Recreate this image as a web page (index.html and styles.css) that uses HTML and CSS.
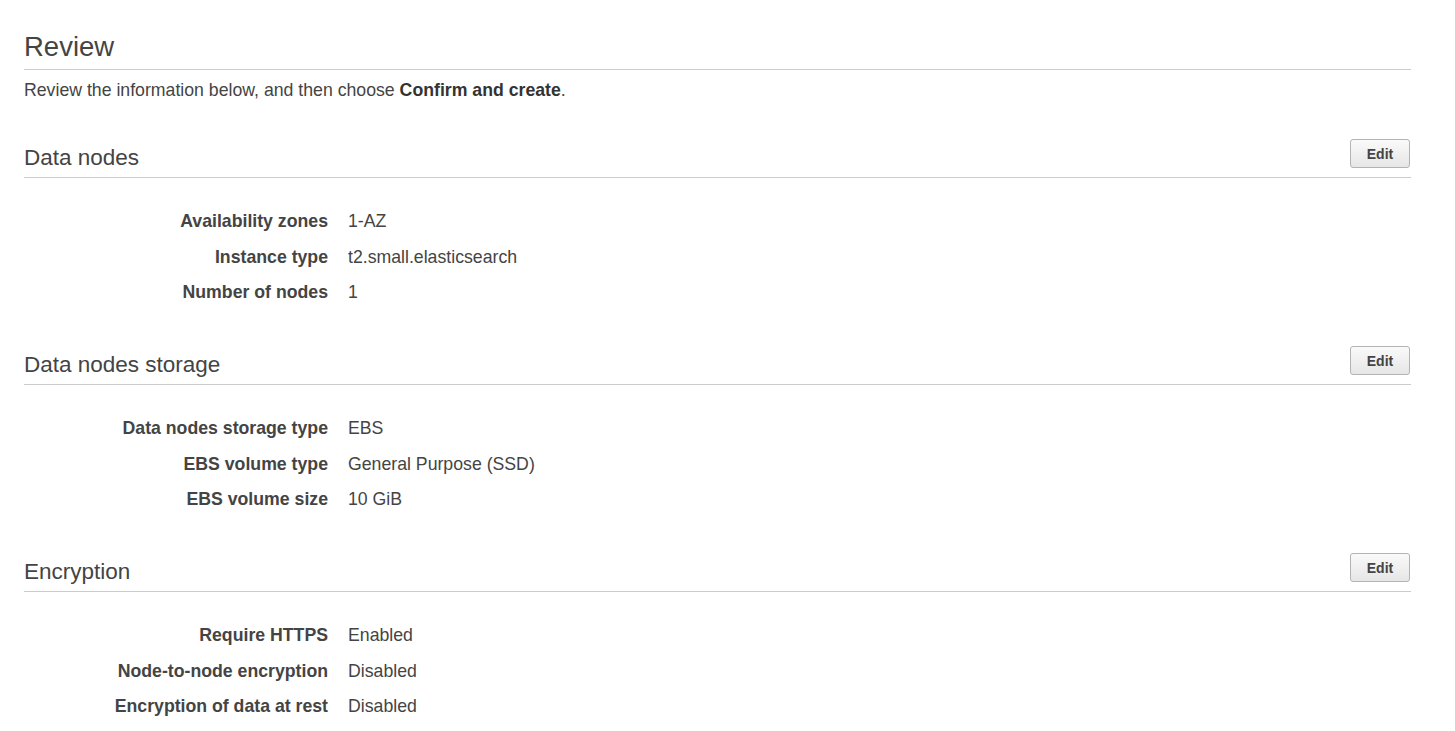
FILE: index.html
```html
<!DOCTYPE html>
<html>
<head>
<meta charset="utf-8">
<link rel="stylesheet" href="styles.css">
</head>
<body>
<div class="page">
  <h1 class="title">Review</h1>
  <p class="intro">Review the information below, and then choose <b>Confirm and create</b>.</p>

  <section class="section">
    <div class="section-head">
      <h2 class="section-title">Data nodes</h2>
      <button class="btn">Edit</button>
    </div>
    <dl class="rows">
      <dt>Availability zones</dt><dd>1-AZ</dd>
      <dt>Instance type</dt><dd>t2.small.elasticsearch</dd>
      <dt>Number of nodes</dt><dd>1</dd>
    </dl>
  </section>

  <section class="section">
    <div class="section-head">
      <h2 class="section-title">Data nodes storage</h2>
      <button class="btn">Edit</button>
    </div>
    <dl class="rows">
      <dt>Data nodes storage type</dt><dd>EBS</dd>
      <dt>EBS volume type</dt><dd>General Purpose (SSD)</dd>
      <dt>EBS volume size</dt><dd>10 GiB</dd>
    </dl>
  </section>

  <section class="section">
    <div class="section-head">
      <h2 class="section-title">Encryption</h2>
      <button class="btn">Edit</button>
    </div>
    <dl class="rows">
      <dt>Require HTTPS</dt><dd>Enabled</dd>
      <dt>Node-to-node encryption</dt><dd>Disabled</dd>
      <dt>Encryption of data at rest</dt><dd>Disabled</dd>
    </dl>
  </section>
</div>
</body>
</html>
```

FILE: styles.css
```css
html, body {
  margin: 0;
  padding: 0;
  background: #ffffff;
}

body {
  font-family: "Liberation Sans", Arial, sans-serif;
  color: #444444;
}

.page {
  padding: 30px 44px 0 24px;
}

.title {
  margin: 0;
  font-size: 27.5px;
  font-weight: normal;
  line-height: 33px;
  padding-bottom: 6px;
  border-bottom: 1px solid #cccccc;
}

.intro {
  margin: 9px 0 0 0;
  font-size: 17.7px;
  line-height: 22px;
}

.intro b {
  color: #333333;
}

.section {
  margin-top: 38px;
}

.section + .section {
  margin-top: 43px;
}

.section-head {
  display: flex;
  align-items: flex-end;
  justify-content: space-between;
  padding-bottom: 6px;
  border-bottom: 1px solid #cccccc;
}

.section-title {
  margin: 0;
  font-size: 22.5px;
  font-weight: normal;
  line-height: 26px;
}

.btn {
  margin: 0 1px 3px 0;
  width: 60px;
  height: 29px;
  padding: 0;
  font-family: "Liberation Sans", Arial, sans-serif;
  font-size: 14px;
  font-weight: bold;
  color: #444444;
  background: linear-gradient(#fafafa, #e6e6e6);
  border: 1px solid #b3b3b3;
  border-radius: 3px;
}

.rows {
  display: grid;
  grid-template-columns: 304px 1fr;
  column-gap: 20px;
  row-gap: 13.5px;
  margin: 0;
  padding-top: 32px;
  font-size: 17.7px;
  line-height: 22px;
}

.rows dt {
  font-weight: bold;
  text-align: right;
}

.rows dd {
  margin: 0;
}
```
